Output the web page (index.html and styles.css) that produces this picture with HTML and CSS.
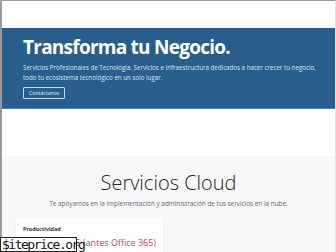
FILE: index.html
```html
<!DOCTYPE html>
<html lang="es">
<head>
  <meta charset="UTF-8">
  <meta name="viewport" content="width=device-width, initial-scale=1.0">
  <title>Transforma tu Negocio</title>
  <link rel="stylesheet" href="styles.css">
</head>
<body>
  <div class="frame">
    <div class="topbar"></div>

    <section class="hero">
      <h1>Transforma tu Negocio.</h1>
      <p>
        <span class="line">Servicios Profesionales de Tecnología. Servicios e Infraestructura dedicados a hacer crecer tu negocio,</span>
        <span class="line">todo tu ecosistema tecnológico en un solo lugar.</span>
      </p>
      <a class="btn-outline" href="#">Contáctanos</a>
    </section>

    <div class="spacer"></div>

    <section class="cloud">
      <h2>Servicios Cloud</h2>
      <p class="lead">Te apoyamos en la implementación y administración de tus servicios en la nube.</p>
      <div class="cards">
        <div class="card">
          <small class="label">Productividad</small>
          <a class="product" href="#">Microsoft 365 (antes Office 365)</a>
        </div>
      </div>
    </section>
  </div>

  <div class="stamp">$iteprice.org</div>
</body>
</html>
```

FILE: styles.css
```css
:root {
  --hero: #285d8c;
  --hero-text: #dfe8f1;
  --soft: #f7f8fa;
  --pink: #c4426e;
}
html, body {
  margin: 0;
  height: 100%;
  overflow: hidden;
}
body {
  font-family: 'Open Sans', 'Noto Sans', sans-serif;
  background: #fff;
  color: #222;
}
.frame {
  height: 100%;
  border-top: 1px solid #9a9a9a;
  border-left: 2px solid #9a9a9a;
  border-right: 1px solid #e4e4e4;
  box-sizing: border-box;
}
.topbar {
  height: 27px;
}
.hero {
  background: var(--hero);
  height: 81px;
  box-sizing: border-box;
  padding: 8px 21px 0;
  border-bottom: 1px solid #4f7fa8;
}
.hero h1 {
  margin: 0;
  color: #fff;
  font-size: 19px;
  line-height: 23px;
  font-weight: 700;
  letter-spacing: -0.75px;
}
.hero p {
  margin: 4px 0 4px;
  color: var(--hero-text);
  font-size: 6.2px;
  line-height: 10px;
}
.hero .line {
  display: block;
  white-space: nowrap;
}
.btn-outline {
  display: block;
  width: fit-content;
  border: 1px solid #c6d6e6;
  border-radius: 1px;
  color: #e8eef5;
  text-decoration: none;
  font-size: 5.2px;
  line-height: 10px;
  padding: 0 5px;
}
.spacer {
  height: 47px;
}
.cloud {
  background: var(--soft);
  padding-top: 14px;
  height: 96px;
  box-sizing: border-box;
  text-align: center;
}
.cloud h2 {
  margin: 0;
  font-size: 20px;
  line-height: 26px;
  font-weight: 300;
  color: #222;
}
.lead {
  margin: 3px 0 0;
  font-size: 6.4px;
  line-height: 10px;
  color: #666;
}
.cards {
  display: flex;
  padding: 9px 0 0 14px;
  text-align: left;
}
.card {
  width: 147px;
  height: 40px;
  background: #fff;
  box-shadow: 0 0 2px rgba(0, 0, 0, 0.06);
  padding: 7px 0 0 7px;
  box-sizing: border-box;
}
.label {
  display: block;
  font-size: 5.4px;
  font-weight: 700;
  color: #333;
  line-height: 8px;
}
.product {
  display: block;
  margin-top: 4px;
  color: var(--pink);
  font-size: 9px;
  line-height: 12px;
  text-decoration: none;
}
.stamp {
  position: absolute;
  left: 0;
  top: 237px;
  width: 77px;
  height: 15px;
  box-sizing: border-box;
  border: 1px solid #222;
  background: #fff;
  color: #111;
  font-family: 'DejaVu Sans Mono', monospace;
  font-size: 13px;
  line-height: 13px;
  letter-spacing: -1.5px;
  padding-left: 1px;
}
```
